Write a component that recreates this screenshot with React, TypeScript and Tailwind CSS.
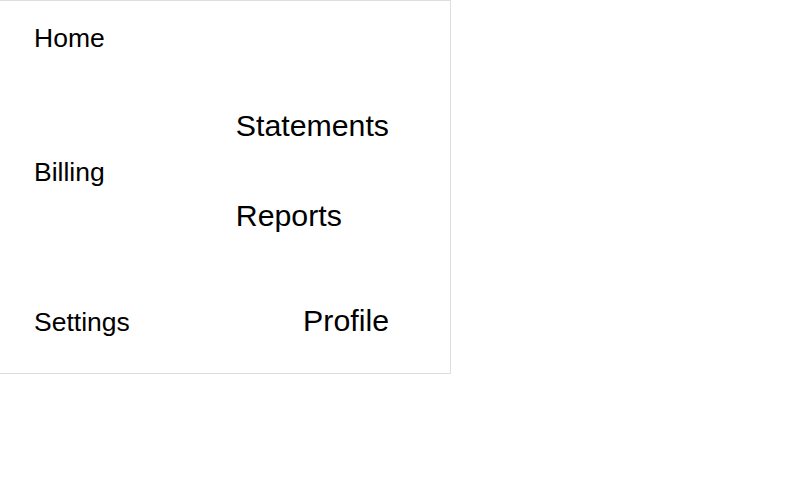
export default function App() {
  return (
    <div
      className="min-h-screen w-full bg-white text-black"
      style={{ fontFamily: '"Liberation Sans", Arial, sans-serif' }}
    >
      <div className="flex h-[374px] w-[451px] flex-col border border-l-0 border-[#dedede] pl-[34px] pr-[61px] pt-[22px]">
        {/* top item */}
        <div className="text-[26.5px] leading-[30px]">Home</div>

        {/* billing group */}
        <div className="mt-[56px] flex">
          <div className="mt-[48px] w-[202px] text-[26.5px] leading-[30px]">
            Billing
          </div>
          <div className="flex flex-col gap-[56px] text-[30.3px] leading-[34px]">
            <span>Statements</span>
            <span>Reports</span>
          </div>
        </div>

        {/* bottom row */}
        <div className="mt-[71px] flex items-baseline justify-between">
          <span className="text-[26.5px] leading-[30px]">Settings</span>
          <span className="text-[30.3px] leading-[34px]">Profile</span>
        </div>
      </div>
    </div>
  );
}
